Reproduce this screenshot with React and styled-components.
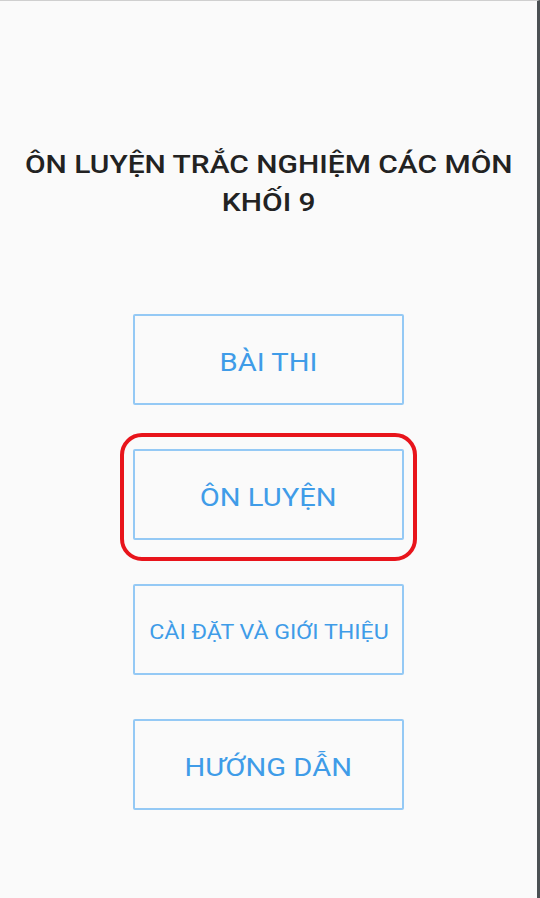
import React from "react";
import styled, { createGlobalStyle } from "styled-components";

const Global = createGlobalStyle`
  html, body { margin: 0; padding: 0; background: #fafafa; }
  body { font-family: Roboto, "Noto Sans", "Liberation Sans", sans-serif; }
`;

const Page = styled.div`
  box-sizing: border-box;
  width: 540px;
  height: 898px;
  background: #fafafa;
  border-top: 1px solid #cfcfcf;
  border-right: 3px solid #4b5053;
  display: flex;
  flex-direction: column;
  align-items: center;
  padding-top: 144px;
  overflow: hidden;
`;

const Title = styled.h1`
  margin: 0;
  padding: 0;
  font-size: 26.5px;
  line-height: 38px;
  font-weight: 500;
  color: #222222;
  text-align: center;
  transform: scaleX(1.13);
`;

const Menu = styled.div`
  margin-top: 93px;
  display: flex;
  flex-direction: column;
  align-items: center;
  gap: 44px;
`;

const Slot = styled.div`
  position: relative;
`;

const Highlight = styled.div`
  position: absolute;
  left: -13px;
  right: -13px;
  top: -16px;
  bottom: -21px;
  border: 4px solid #e8141b;
  border-radius: 22px;
  pointer-events: none;
`;

const MenuButton = styled.button`
  box-sizing: border-box;
  width: 271px;
  height: 91px;
  background: transparent;
  border: 2px solid #94c9f5;
  border-radius: 2px;
  color: #3f9ce8;
  font-family: Roboto, "Noto Sans", "Liberation Sans", sans-serif;
  font-size: ${(p) => (p.$small ? "20.5px" : "26.5px")};
  font-weight: 400;
  display: flex;
  align-items: center;
  justify-content: center;
  padding: 4px 0 0;
  cursor: pointer;
`;

const Label = styled.span`
  display: inline-block;
  white-space: nowrap;
  transform: scaleX(${(p) => (p.$small ? 1.13 : 1.1)});
`;

const items = [
  { label: "BÀI THI" },
  { label: "ÔN LUYỆN", highlighted: true },
  { label: "CÀI ĐẶT VÀ GIỚI THIỆU", small: true },
  { label: "HƯỚNG DẪN" },
];

export default function App() {
  return (
    <>
      <Global />
      <Page>
        <Title>
          ÔN LUYỆN TRẮC NGHIỆM CÁC MÔN
          <br />
          KHỐI 9
        </Title>
        <Menu>
          {items.map((it) => (
            <Slot key={it.label}>
              <MenuButton $small={it.small}>
                <Label $small={it.small}>{it.label}</Label>
              </MenuButton>
              {it.highlighted && <Highlight />}
            </Slot>
          ))}
        </Menu>
      </Page>
    </>
  );
}
